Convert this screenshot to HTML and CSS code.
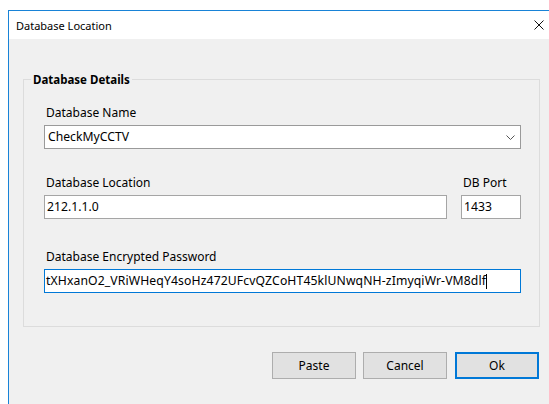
FILE: index.html
```html
<!DOCTYPE html>
<html lang="en">
<head>
<meta charset="utf-8">
<title>Database Location</title>
<link rel="stylesheet" href="styles.css">
</head>
<body>
<div class="window">
  <div class="titlebar">
    <span class="title">Database Location</span>
    <span class="close">
      <svg width="10" height="10" viewBox="0 0 10 10"><path d="M0.5 0.5 L9.5 9.5 M9.5 0.5 L0.5 9.5" stroke="#111" stroke-width="1" fill="none"/></svg>
    </span>
  </div>
  <div class="content">
    <div class="group">
      <div class="group-title">Database Details</div>
      <div class="label first">Database Name</div>
      <div class="field combo">
        <span class="value">CheckMyCCTV</span>
        <svg class="chevron" width="9" height="5" viewBox="0 0 9 5"><path d="M0.5 0.5 L4.5 4.5 L8.5 0.5" stroke="#555" stroke-width="1" fill="none"/></svg>
      </div>
      <div class="row">
        <div class="col loc">
          <div class="label">Database Location</div>
          <div class="field"><span class="value">212.1.1.0</span></div>
        </div>
        <div class="col port">
          <div class="label">DB Port</div>
          <div class="field"><span class="value">1433</span></div>
        </div>
      </div>
      <div class="label pw-label">Database Encrypted Password</div>
      <div class="field focused"><span class="value">tXHxanO2_VRiWHeqY4soHz472UFcvQZCoHT45klUNwqNH-zImyqiWr-VM8dlf</span><span class="caret"></span></div>
    </div>
    <div class="buttons">
      <button class="btn">Paste</button>
      <button class="btn">Cancel</button>
      <button class="btn default">Ok</button>
    </div>
  </div>
</div>
</body>
</html>
```
FILE: styles.css
```css
html, body {
  margin: 0;
  padding: 0;
  background: #ffffff;
  overflow: hidden;
  height: 404px;
}

body {
  font-family: "Noto Sans", "Segoe UI", sans-serif;
  font-size: 12px;
  color: #000;
}

.window {
  margin: 10px 0 0 8px;
  width: 554px;
  height: 394px;
  border-top: 1px solid #1883d7;
  border-left: 1px solid #1883d7;
  box-sizing: border-box;
  display: flex;
  flex-direction: column;
}

.titlebar {
  height: 28px;
  background: #ffffff;
  display: flex;
  align-items: center;
  padding-left: 7px;
}

.title {
  font-size: 11px;
  line-height: 14px;
  margin-top: 1px;
}

.close {
  margin-left: auto;
  width: 46px;
  height: 28px;
  display: flex;
  align-items: center;
  justify-content: center;
}

.content {
  flex: 1;
  background: #f0f0f0;
  padding: 40px 0 0 14px;
}

.group {
  width: 517px;
  height: 248px;
  box-sizing: border-box;
  border: 1px solid #dcdcdc;
  padding: 0 0 0 20px;
}

.group-title {
  width: max-content;
  margin: -9px 0 0 -13px;
  padding: 0 2px;
  background: #f0f0f0;
  font-weight: bold;
  font-size: 11.5px;
  line-height: 17px;
}

.label {
  line-height: 16px;
  padding-left: 2px;
  margin-bottom: 4px;
}

.label.first {
  margin-top: 17px;
}

.field {
  height: 24px;
  box-sizing: border-box;
  background: #ffffff;
  border: 1px solid #a5a5a5;
  display: flex;
  align-items: center;
  padding-left: 2px;
  font-size: 12.2px;
  line-height: 16px;
  white-space: nowrap;
}

.combo {
  width: 477px;
  border-color: #9a9a9a;
  padding-left: 3px;
}

.chevron {
  margin-left: auto;
  margin-right: 5px;
  margin-top: 1px;
}

.row {
  display: flex;
  gap: 14px;
  margin-top: 26px;
}

.loc {
  width: 403px;
}

.port {
  width: 60px;
}

.pw-label {
  margin-top: 30px;
}

.focused {
  width: 477px;
  border-color: #0078d7;
  padding-left: 1px;
  letter-spacing: 0.12px;
}

.caret {
  width: 1px;
  height: 15px;
  background: #000;
}

.buttons {
  width: 516px;
  display: flex;
  justify-content: flex-end;
  margin-top: 25px;
}

.btn {
  width: 84px;
  height: 27px;
  box-sizing: border-box;
  margin-left: 7px;
  background: #e1e1e1;
  border: 1px solid #adadad;
  font-family: "Noto Sans", "Segoe UI", sans-serif;
  font-size: 12px;
  color: #000;
  padding: 0;
}

.btn.default {
  margin-left: 8px;
  border: 2px solid #0078d7;
}
```
